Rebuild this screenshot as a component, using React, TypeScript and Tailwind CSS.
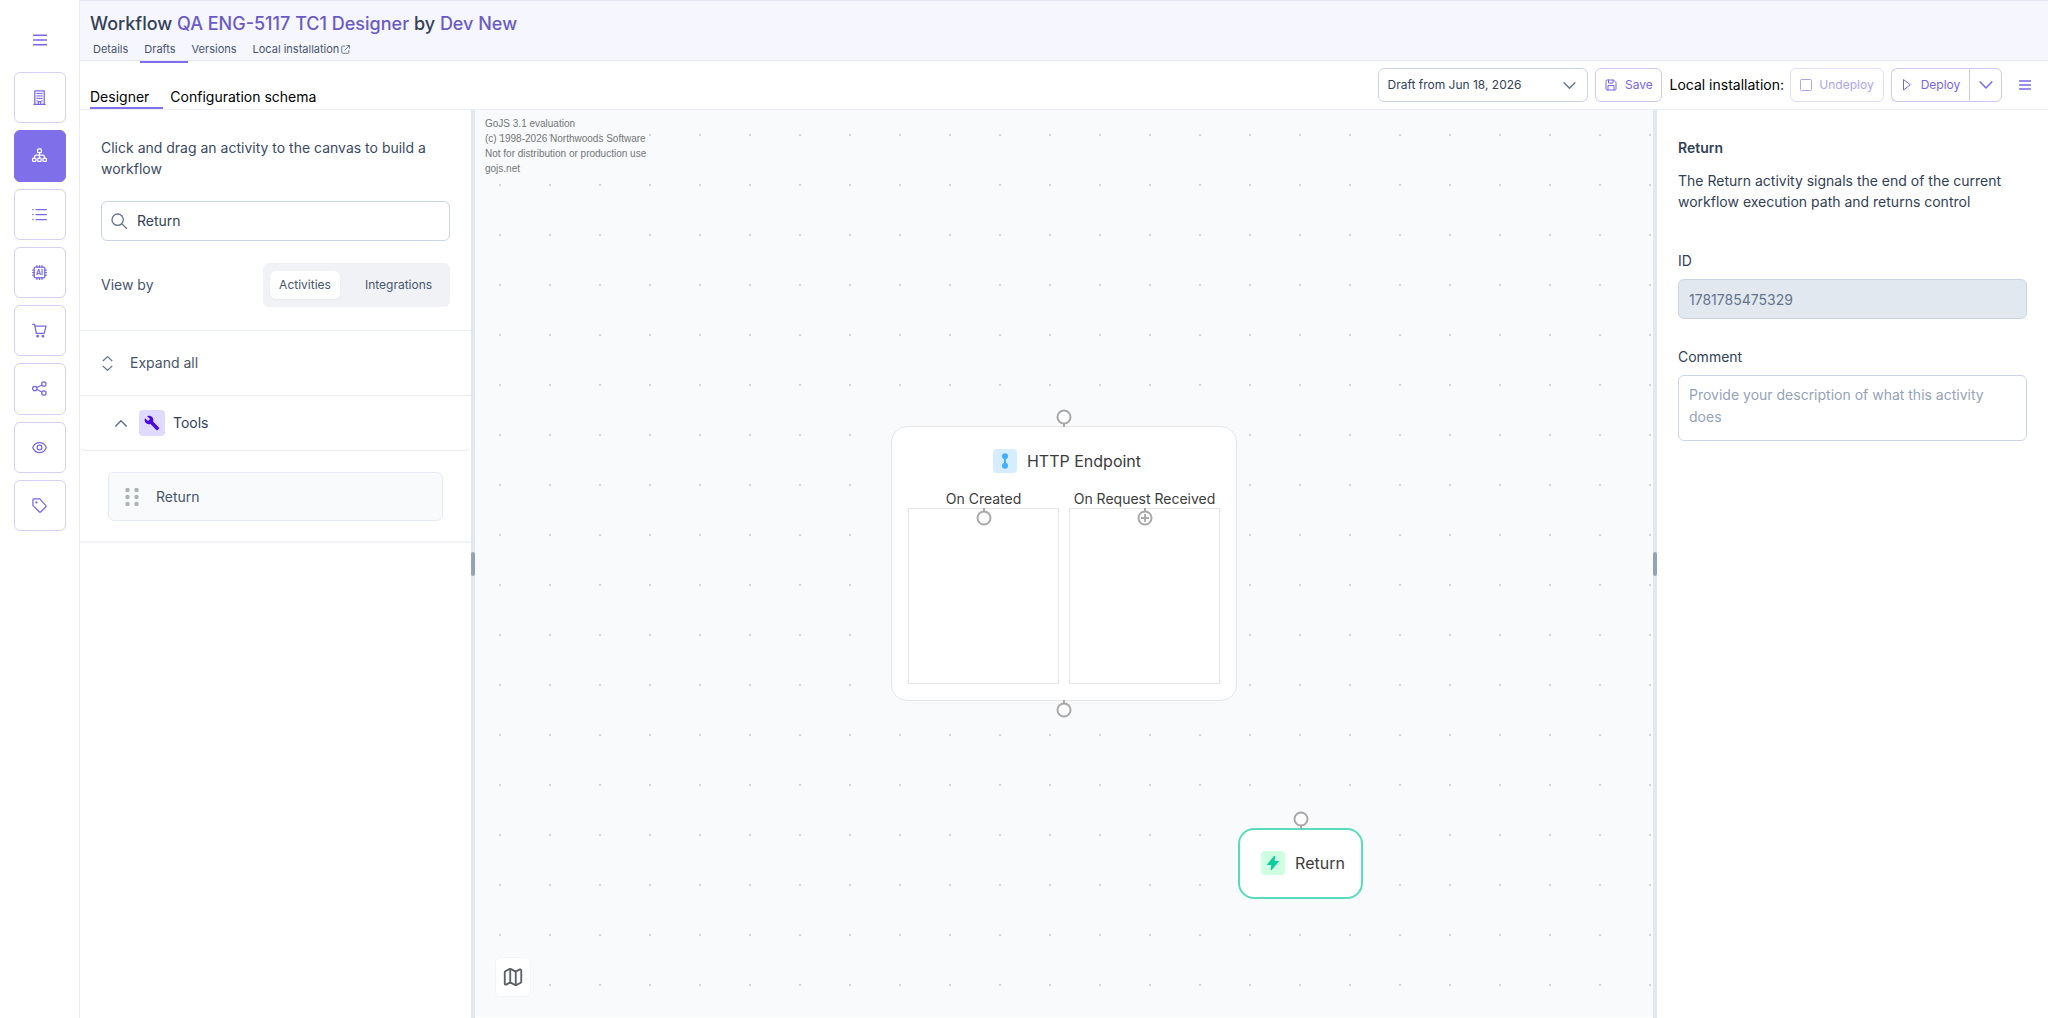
import React, { useState } from "react";
import { Map } from "lucide-react";
import { clsx } from "clsx";

const stroke = {
    viewBox: "0 0 24 24",
    fill: "none",
    stroke: "currentColor",
    strokeWidth: 2,
    strokeLinecap: "round" as const,
    strokeLinejoin: "round" as const,
    "aria-hidden": true,
};

function BarsIcon({ className }: { className?: string }) {
    return (
        <svg {...stroke} strokeWidth={2.6} className={className}>
            <path d="M1 4h22M1 12h22M1 20h22" />
        </svg>
    );
}

function ChevronIcon({ className, up }: { className?: string; up?: boolean }) {
    return (
        <svg {...stroke} strokeWidth={2.6} className={className}>
            <path d={up ? "M3 17l9-9 9 9" : "M2 7l10 10L22 7"} />
        </svg>
    );
}

const navItems = [
    {
        label: "Organization",
        icon: (
            <>
                <path d="M4.500 22.500V1.500h15v21M3 22.800h18M10 22.500v-4h4v4" />
                <path d="M8 5.500h1.500M14.500 5.500H16M8 9.500h1.500M14.500 9.500H16M8 13.500h1.500M14.500 13.500H16M11.500 5.500h1M11.500 9.500h1M11.500 13.500h1M8 17.500h.5M15.500 17.500h.5" />
            </>
        ),
    },
    {
        label: "Workflows",
        active: true,
        icon: (
            <>
                <rect x="9" y="1.500" width="6" height="6" rx="1.500" />
                <rect x="1" y="16" width="5.500" height="5.500" rx="1.500" />
                <rect x="9.250" y="16" width="5.500" height="5.500" rx="1.500" />
                <rect x="17.500" y="16" width="5.500" height="5.500" rx="1.500" />
                <path d="M12 7.500V16M4 16v-1.500a3 3 0 0 1 3-3h10a3 3 0 0 1 3 3V16" />
            </>
        ),
    },
    {
        label: "Logs",
        icon: <path d="M6.500 4H23M6.500 12H23M6.500 20H23M1.200 4h.6M1.200 12h.6M1.200 20h.6" />,
    },
    {
        label: "AI",
        icon: (
            <>
                <rect x="3.500" y="3.500" width="17" height="17" rx="2" />
                <path d="M8 3.500V1M12 3.500V1M16 3.500V1M8 23v-2.500M12 23v-2.500M16 23v-2.500M3.500 8H1M3.500 12H1M3.500 16H1M23 8h-2.500M23 12h-2.500M23 16h-2.500" />
                <text x="12" y="16" textAnchor="middle" fontSize="11" fontWeight="700" fill="currentColor" stroke="none">
                    AI
                </text>
            </>
        ),
    },
    {
        label: "Marketplace",
        icon: (
            <>
                <path d="M1 2h3l3 14.500h12.500L22.500 5H4.600" />
                <circle cx="9" cy="21" r="1.200" fill="currentColor" />
                <circle cx="17.500" cy="21" r="1.200" fill="currentColor" />
            </>
        ),
    },
    {
        label: "Share",
        icon: (
            <>
                <circle cx="4.500" cy="12" r="3.500" />
                <circle cx="19" cy="4.800" r="3.500" />
                <circle cx="19" cy="19.200" r="3.500" />
                <path d="M7.700 10.400l8.100-4M7.700 13.600l8.100 4" />
            </>
        ),
    },
    {
        label: "Monitoring",
        icon: (
            <>
                <path d="M12 4C6.500 4 2.800 8 1.500 11.300a2 2 0 0 0 0 1.400C2.800 16 6.500 20 12 20s9.200-4 10.500-7.300a2 2 0 0 0 0-1.400C21.200 8 17.500 4 12 4z" />
                <circle cx="12" cy="12" r="3.800" />
            </>
        ),
    },
    {
        label: "Tags",
        icon: (
            <>
                <path d="M1.500 2.500v9.300l10 10.200a2 2 0 0 0 2.800 0l7.500-7.500a2 2 0 0 0 0-2.800L12.500 1.500h-10a1 1 0 0 0-1 1z" />
                <circle cx="7" cy="7" r=".8" fill="currentColor" />
            </>
        ),
    },
];

function Sidebar() {
    return (
        <aside className="flex w-20 shrink-0 flex-col items-center border-r border-[#ececf3] bg-white text-[#7767e6]">
            <button aria-label="Toggle menu" className="flex h-[72px] w-full items-center justify-center pt-2">
                <BarsIcon className="size-[14px]" />
            </button>
            <nav className="flex h-[459px] flex-col gap-[7px]">
                {navItems.map((item) => (
                    <button
                        key={item.label}
                        aria-label={item.label}
                        className={clsx(
                            "flex w-[52px] flex-1 items-center justify-center rounded-md border",
                            item.active ? "border-[#7f6fe8] bg-[#7f6fe8] text-white" : "border-[#d6d0f8]"
                        )}
                    >
                        <svg {...stroke} className="size-[15px]">
                            {item.icon}
                        </svg>
                    </button>
                ))}
            </nav>
        </aside>
    );
}

function Header() {
    const link = "flex h-6 items-center gap-[2px] border-b-2 pb-[2px]";
    return (
        <header className="flex h-[61px] flex-col justify-between border-t border-b border-[#e6e8f5] bg-[#f6f6ff] pl-[10px]">
            <h1 className="pt-2 text-lg leading-[30px] font-medium text-[#334155]">
                Workflow <a href="#workflow" className="text-[#6a5bc4]">QA ENG-5117 TC1 Designer</a> by{" "}
                <a href="#owner" className="text-[#6a5bc4]">Dev New</a>
            </h1>
            <nav className="flex text-[11px] text-[#475569]">
                <a href="#details" className={`${link} border-transparent pr-3 pl-[3px]`}>Details</a>
                <a href="#drafts" className={`${link} border-[#7f6fe8] pr-3 pl-1`}>Drafts</a>
                <a href="#versions" className={`${link} border-transparent pr-3 pl-1`}>Versions</a>
                <a href="#local" className={`${link} border-transparent pl-1`}>
                    Local installation
                    <svg {...stroke} className="size-[9px]">
                        <path d="M10 3H4a2 2 0 0 0-2 2v15a2 2 0 0 0 2 2h15a2 2 0 0 0 2-2v-6M15 1.500h7.500V9M22 2L10 14" />
                    </svg>
                </a>
            </nav>
        </header>
    );
}

function Toolbar() {
    const btn = "flex h-[34px] items-center rounded-md border border-[#d0c9f8] text-xs text-[#7767e6]";
    return (
        <div className="flex h-[49px] items-center border-b border-[#ecedf8] pr-[17px] pl-[10px]">
            <div className="flex flex-1 items-end self-stretch text-sm text-black">
                <button className="border-b-2 border-[#7f6fe8] pr-[14px]">Designer</button>
                <button className="border-b-2 border-transparent pl-[7px]">Configuration schema</button>
            </div>
            <div className="relative mr-[7px]">
                <select aria-label="Draft" className="h-[34px] w-[210px] appearance-none rounded-md border border-[#cbd5e1] bg-white pl-2 text-xs text-[#334155]">
                    <option>Draft from Jun 18, 2026</option>
                </select>
                <ChevronIcon className="pointer-events-none absolute top-[11px] right-3 size-[13px] text-[#64748b]" />
            </div>
            <button className={`${btn} mr-[7px] w-[67px] justify-center gap-2`}>
                <svg {...stroke} className="size-3">
                    <path d="M2 4a2 2 0 0 1 2-2h13l5 5v13a2 2 0 0 1-2 2H4a2 2 0 0 1-2-2zM7 2v6h9V2M6 22v-9h12v9" />
                </svg>
                Save
            </button>
            <span className="mr-[6px] text-sm text-black">Local installation:</span>
            <button disabled className={`${btn} mr-[7px] w-[94px] justify-center gap-[7px] opacity-60`}>
                <svg {...stroke} className="size-3">
                    <rect x="1" y="1" width="22" height="22" rx="2" />
                </svg>
                Undeploy
            </button>
            <div className="mr-[17px] flex">
                <button className={`${btn} w-[78px] justify-center gap-2 rounded-r-none border-r-0`}>
                    <svg {...stroke} className="size-3">
                        <path d="M5 2v20l13-10z" />
                    </svg>
                    Deploy
                </button>
                <button aria-label="More deploy options" className={`${btn} w-[33px] justify-center rounded-l-none`}>
                    <ChevronIcon className="size-[14px]" />
                </button>
            </div>
            <button aria-label="Menu" className="text-[#7767e6]">
                <BarsIcon className="size-3" />
            </button>
        </div>
    );
}

function ActivityPanel() {
    const [query, setQuery] = useState("Return");
    return (
        <section className="w-[391px] shrink-0 text-sm text-[#475569]">
            <div className="border-b border-[#eaf0f4] px-[21px] pt-[27px] pb-[23px]">
                <p className="leading-[21px] text-[#3b4a60]">Click and drag an activity to the canvas to build a workflow</p>
                <label className="mt-[22px] flex h-10 items-center gap-[10px] rounded-md border border-[#cbd5e1] px-[9px]">
                    <svg {...stroke} className="size-4 shrink-0 text-[#64748b]">
                        <circle cx="10" cy="10" r="8.500" />
                        <path d="M16.300 16.300L23 23" />
                    </svg>
                    <input aria-label="Search activities" value={query} onChange={(e) => setQuery(e.target.value)} className="w-full text-[#334155] outline-none" />
                </label>
                <div className="mt-[22px] flex items-center justify-between">
                    <span>View by</span>
                    <div className="flex h-11 items-center gap-[14px] rounded-md bg-[#f1f2f6] px-[7px] text-xs">
                        <button className="flex h-7 w-[70px] items-center justify-center rounded-md bg-white shadow-xs">Activities</button>
                        <button className="w-[89px]">Integrations</button>
                    </div>
                </div>
            </div>
            <button className="flex h-[65px] w-full items-center gap-[15px] border-b border-[#e9edf2] pl-5">
                <svg {...stroke} className="size-[15px] text-[#64748b]">
                    <path d="M5 7.500l7-6.500 7 6.500M5 16.500l7 6.500 7-6.500" />
                </svg>
                Expand all
            </button>
            <div className="border-b-2 border-[#f1f4f8]">
                <button className="flex h-[55px] w-full items-center rounded-b-md border-b border-[#e9edf2] pl-[34px] text-[#334155]">
                    <ChevronIcon up className="mr-[11px] size-[14px] text-[#64748b]" />
                    <span className="mr-2 flex size-[26px] items-center justify-center rounded-sm bg-[#e0daff] text-[#4c0ae0]">
                        <svg viewBox="0 0 24 24" className="size-4" fill="currentColor" aria-hidden="true">
                            <path d="M22.700 19l-9.100-9.100c.9-2.300.4-5-1.500-6.900-2-2-5-2.400-7.400-1.300L9 6 6 9 1.600 4.700C.4 7.100.9 10.100 2.900 12.100c1.900 1.900 4.600 2.400 6.900 1.500l9.100 9.100c.4.4 1 .4 1.400 0l2.300-2.300c.5-.4.5-1.100.1-1.400z" />
                        </svg>
                    </span>
                    Tools
                </button>
                <div className="px-7 pt-[21px] pb-5">
                    <div className="flex h-[49px] items-center gap-[17px] rounded-md border border-[#e6ebf3] bg-[#f8fafc] pl-4">
                        <svg viewBox="0 0 14 18" className="w-[14px] fill-[#adb2b5]" aria-hidden="true">
                            {[2, 9, 16].map((y) => (
                                <g key={y}>
                                    <circle cx="2.500" cy={y} r="2.200" />
                                    <circle cx="11.500" cy={y} r="2.200" />
                                </g>
                            ))}
                        </svg>
                        Return
                    </div>
                </div>
            </div>
        </section>
    );
}

function Splitter() {
    return (
        <div className="flex w-1 shrink-0 items-center bg-[#e2e8f0]">
            <div className="h-6 w-1 rounded-sm bg-[#94a3b8]" />
        </div>
    );
}

// stem direction shows which side of the port touches its node
function Port({ className, stem, plus }: { className: string; stem: "up" | "down"; plus?: boolean }) {
    return (
        <svg viewBox="0 0 16 18" className={`absolute left-1/2 h-[18px] w-4 -translate-x-1/2 ${className}`} fill="white" stroke="#a8a8a8" strokeWidth="2" aria-hidden="true">
            <path d={stem === "up" ? "M8 0v3" : "M8 15v3"} />
            <circle cx="8" cy={stem === "up" ? 10 : 8} r="6.500" />
            {plus && <path d="M4 10h8M8 6v8" strokeWidth="1.800" />}
        </svg>
    );
}

function Canvas() {
    return (
        <main className="relative mb-px min-w-0 flex-1 overflow-hidden bg-[#f8fafc] bg-[radial-gradient(circle_at_center,#d3d5d8_1px,transparent_1.5px)] bg-size-[50px_50px]">
            <p className="pt-[6px] pl-[10px] font-['Liberation_Sans',sans-serif] text-[10px] leading-[15px] text-[#747577]">
                GoJS 3.1 evaluation<br />
                (c) 1998-2026 Northwoods Software<br />
                Not for distribution or production use<br />
                gojs.net
            </p>

            <article className="absolute top-[316px] left-[416px] w-[346px] rounded-2xl border border-[#e6e6e6] bg-white px-4 pb-4 text-[#3c3c3c]">
                <Port stem="down" className="-top-[18px]" />
                <h2 className="flex h-16 items-center justify-center gap-[10px] pt-[3px] pl-[6px] text-base">
                    <span className="flex size-6 items-center justify-center rounded-sm bg-[#d6edff]">
                        <svg viewBox="0 0 24 24" className="size-6" fill="#45aeff" aria-hidden="true">
                            <circle cx="12" cy="7.300" r="3" />
                            <circle cx="12" cy="16.700" r="3" />
                            <path d="M11 8h2v8h-2z" />
                        </svg>
                    </span>
                    HTTP Endpoint
                </h2>
                <div className="flex gap-[10px] text-sm leading-[15px]">
                    {["On Created", "On Request Received"].map((slot, i) => (
                        <div key={slot} className="min-w-0 flex-1 text-center whitespace-nowrap">
                            <p className="-mx-1 pb-[2px]">{slot}</p>
                            <div className="relative h-44 border border-[#e6e6e6]">
                                <Port stem="up" plus={i === 1} className="-top-px" />
                            </div>
                        </div>
                    ))}
                </div>
                <Port stem="up" className="-bottom-[18px]" />
            </article>

            <article className="absolute top-[718px] left-[763px] flex h-[71px] w-[125px] items-center justify-center rounded-2xl border-2 border-[#5adbbb] bg-white text-[#3c3c3c]">
                <Port stem="down" className="-top-[19px]" />
                <h2 className="flex items-center gap-[10px] pb-[2px] pl-[5px] text-base">
                    <span className="flex size-6 items-center justify-center rounded-sm bg-[#cfffe3]">
                        <svg viewBox="0 0 24 24" className="size-6" fill="#07cf9c" stroke="#07cf9c" strokeLinejoin="round" aria-hidden="true">
                            <path d="M13.500 5l-7 8.500h4.500L10 19l7.500-8.500H13z" />
                        </svg>
                    </span>
                    Return
                </h2>
            </article>

            <button aria-label="Toggle overview map" className="absolute bottom-5 left-5 flex h-10 w-9 items-center justify-center rounded-md border border-[#f1f4f8] bg-white text-[#5a6068]">
                <Map className="size-[22px]" strokeWidth={2} />
            </button>
        </main>
    );
}

function PropertiesPanel() {
    return (
        <section className="flex w-[391px] shrink-0 flex-col px-[21px] pt-[27px] text-sm leading-[21px] text-[#334155]">
            <h2 className="font-semibold">Return</h2>
            <p className="mt-3">The Return activity signals the end of the current workflow execution path and returns control</p>
            <label htmlFor="activity-id" className="mt-[38px]">ID</label>
            <input id="activity-id" disabled value="1781785475329" className="mt-2 h-10 rounded-md border border-[#cbd5e1] bg-[#e2e8f0] px-[10px] text-[#64748b]" />
            <label htmlFor="comment" className="mt-[27px]">Comment</label>
            <textarea
                id="comment"
                rows={2}
                placeholder="Provide your description of what this activity does"
                className="mt-2 h-[66px] resize-none rounded-md border border-[#cbd5e1] px-[10px] py-2 leading-[22px] placeholder:text-[#94a3b8]"
            />
        </section>
    );
}

export default function App() {
    return (
        <div className="flex min-h-screen bg-white font-[Inter,sans-serif]">
            <Sidebar />
            <div className="flex min-w-0 flex-1 flex-col">
                <Header />
                <Toolbar />
                <div className="flex flex-1">
                    <ActivityPanel />
                    <Splitter />
                    <Canvas />
                    <Splitter />
                    <PropertiesPanel />
                </div>
            </div>
        </div>
    );
}
